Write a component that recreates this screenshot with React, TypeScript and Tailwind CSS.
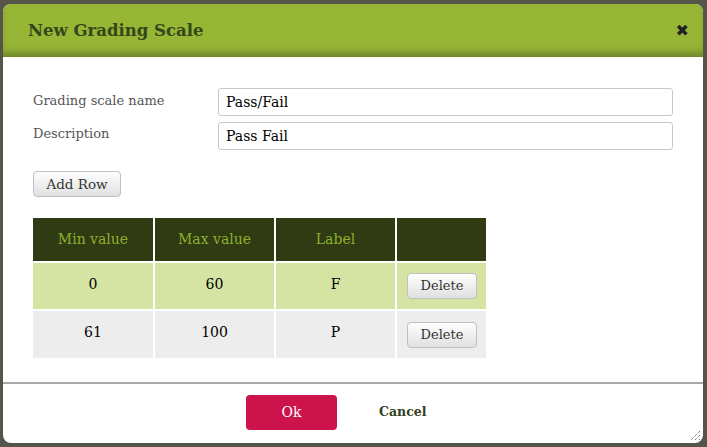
import React from "react";

const rows = [
  { min: "0", max: "60", label: "F", bg: "bg-[#d5e3a3]" },
  { min: "61", max: "100", label: "P", bg: "bg-[#ededed]" },
];

const serif = "font-['DejaVu_Serif',serif]";

export default function App() {
  return (
    <div className={`w-[707px] h-[447px] bg-[#55554a] pt-[4px] pl-[3px] ${serif}`}>
      <div className="w-[700px] h-[439px] bg-white rounded-[8px] flex flex-col overflow-hidden">
        {/* header */}
        <div className="h-[53px] bg-[#97b636] flex items-center justify-between pl-[25px] pr-[14px] shadow-[inset_0_-8px_8px_-4px_rgba(60,70,30,0.5)]">
          <h1 className="text-[16.5px] font-bold text-[#34461a] mt-[1px]">New Grading Scale</h1>
          <span className="text-[16px] font-bold text-[#222] font-['DejaVu_Sans',sans-serif] mt-[1px]">✖</span>
        </div>

        {/* body */}
        <div className="flex-1 px-[30px] pt-[31px]">
          <div className="flex flex-col gap-[6px]">
            <div className="flex items-center">
              <label className="w-[185px] text-[13px] text-[#555] -mt-[3px]">Grading scale name</label>
              <div className="w-[455px] h-[28px] border border-[#c8c8c8] rounded-[3px] flex items-center px-[7px] text-[14px] text-black">Pass/Fail</div>
            </div>
            <div className="flex items-center">
              <label className="w-[185px] text-[13px] text-[#555] -mt-[5px]">Description</label>
              <div className="w-[455px] h-[28px] border border-[#c8c8c8] rounded-[3px] flex items-center px-[7px] text-[14px] text-black">Pass Fail</div>
            </div>
          </div>

          <button className="mt-[21px] w-[88px] h-[26px] border border-[#c0c0c0] rounded-[4px] bg-gradient-to-b from-white to-[#e0e0e0] text-[13.5px] text-[#333]">
            Add Row
          </button>

          <table className="mt-[21px] border-collapse text-[14px]">
            <thead>
              <tr className="bg-[#303a13] text-[#8cb02c] h-[44px]">
                <th className="w-[121px] font-normal border-r-2 border-white">Min value</th>
                <th className="w-[121px] font-normal border-r-2 border-white">Max value</th>
                <th className="w-[121px] font-normal border-r-2 border-white">Label</th>
                <th className="w-[90px] font-normal"></th>
              </tr>
            </thead>
            <tbody>
              {rows.map((r) => (
                <tr key={r.min} className={`${r.bg} h-[48px] border-t-2 border-white text-black`}>
                  <td className="text-center border-r-2 border-white pb-[4px]">{r.min}</td>
                  <td className="text-center border-r-2 border-white pb-[4px]">{r.max}</td>
                  <td className="text-center border-r-2 border-white pb-[4px]">{r.label}</td>
                  <td className="pl-[10px]">
                    <button className="w-[70px] h-[26px] border border-[#c0c0c0] rounded-[4px] bg-gradient-to-b from-white to-[#e0e0e0] text-[13px] text-[#333]">
                      Delete
                    </button>
                  </td>
                </tr>
              ))}
            </tbody>
          </table>
        </div>

        {/* footer */}
        <div className="relative h-[61px] border-t-2 border-[#a8a8a8] flex items-start pt-[11px] pl-[243px]">
          <button className="w-[91px] h-[35px] bg-[#cc134b] rounded-[4px] text-white text-[14px]">Ok</button>
          <button className="ml-[42px] h-[35px] text-[12.5px] font-bold text-[#34401c]">Cancel</button>
          <svg className="absolute right-[2px] bottom-[2px]" width="12" height="12" viewBox="0 0 12 12">
            <path d="M11 2 L2 11 M11 6 L6 11 M11 10 L10 11" stroke="#444" strokeWidth="1" strokeDasharray="1 1" />
          </svg>
        </div>
      </div>
    </div>
  );
}
